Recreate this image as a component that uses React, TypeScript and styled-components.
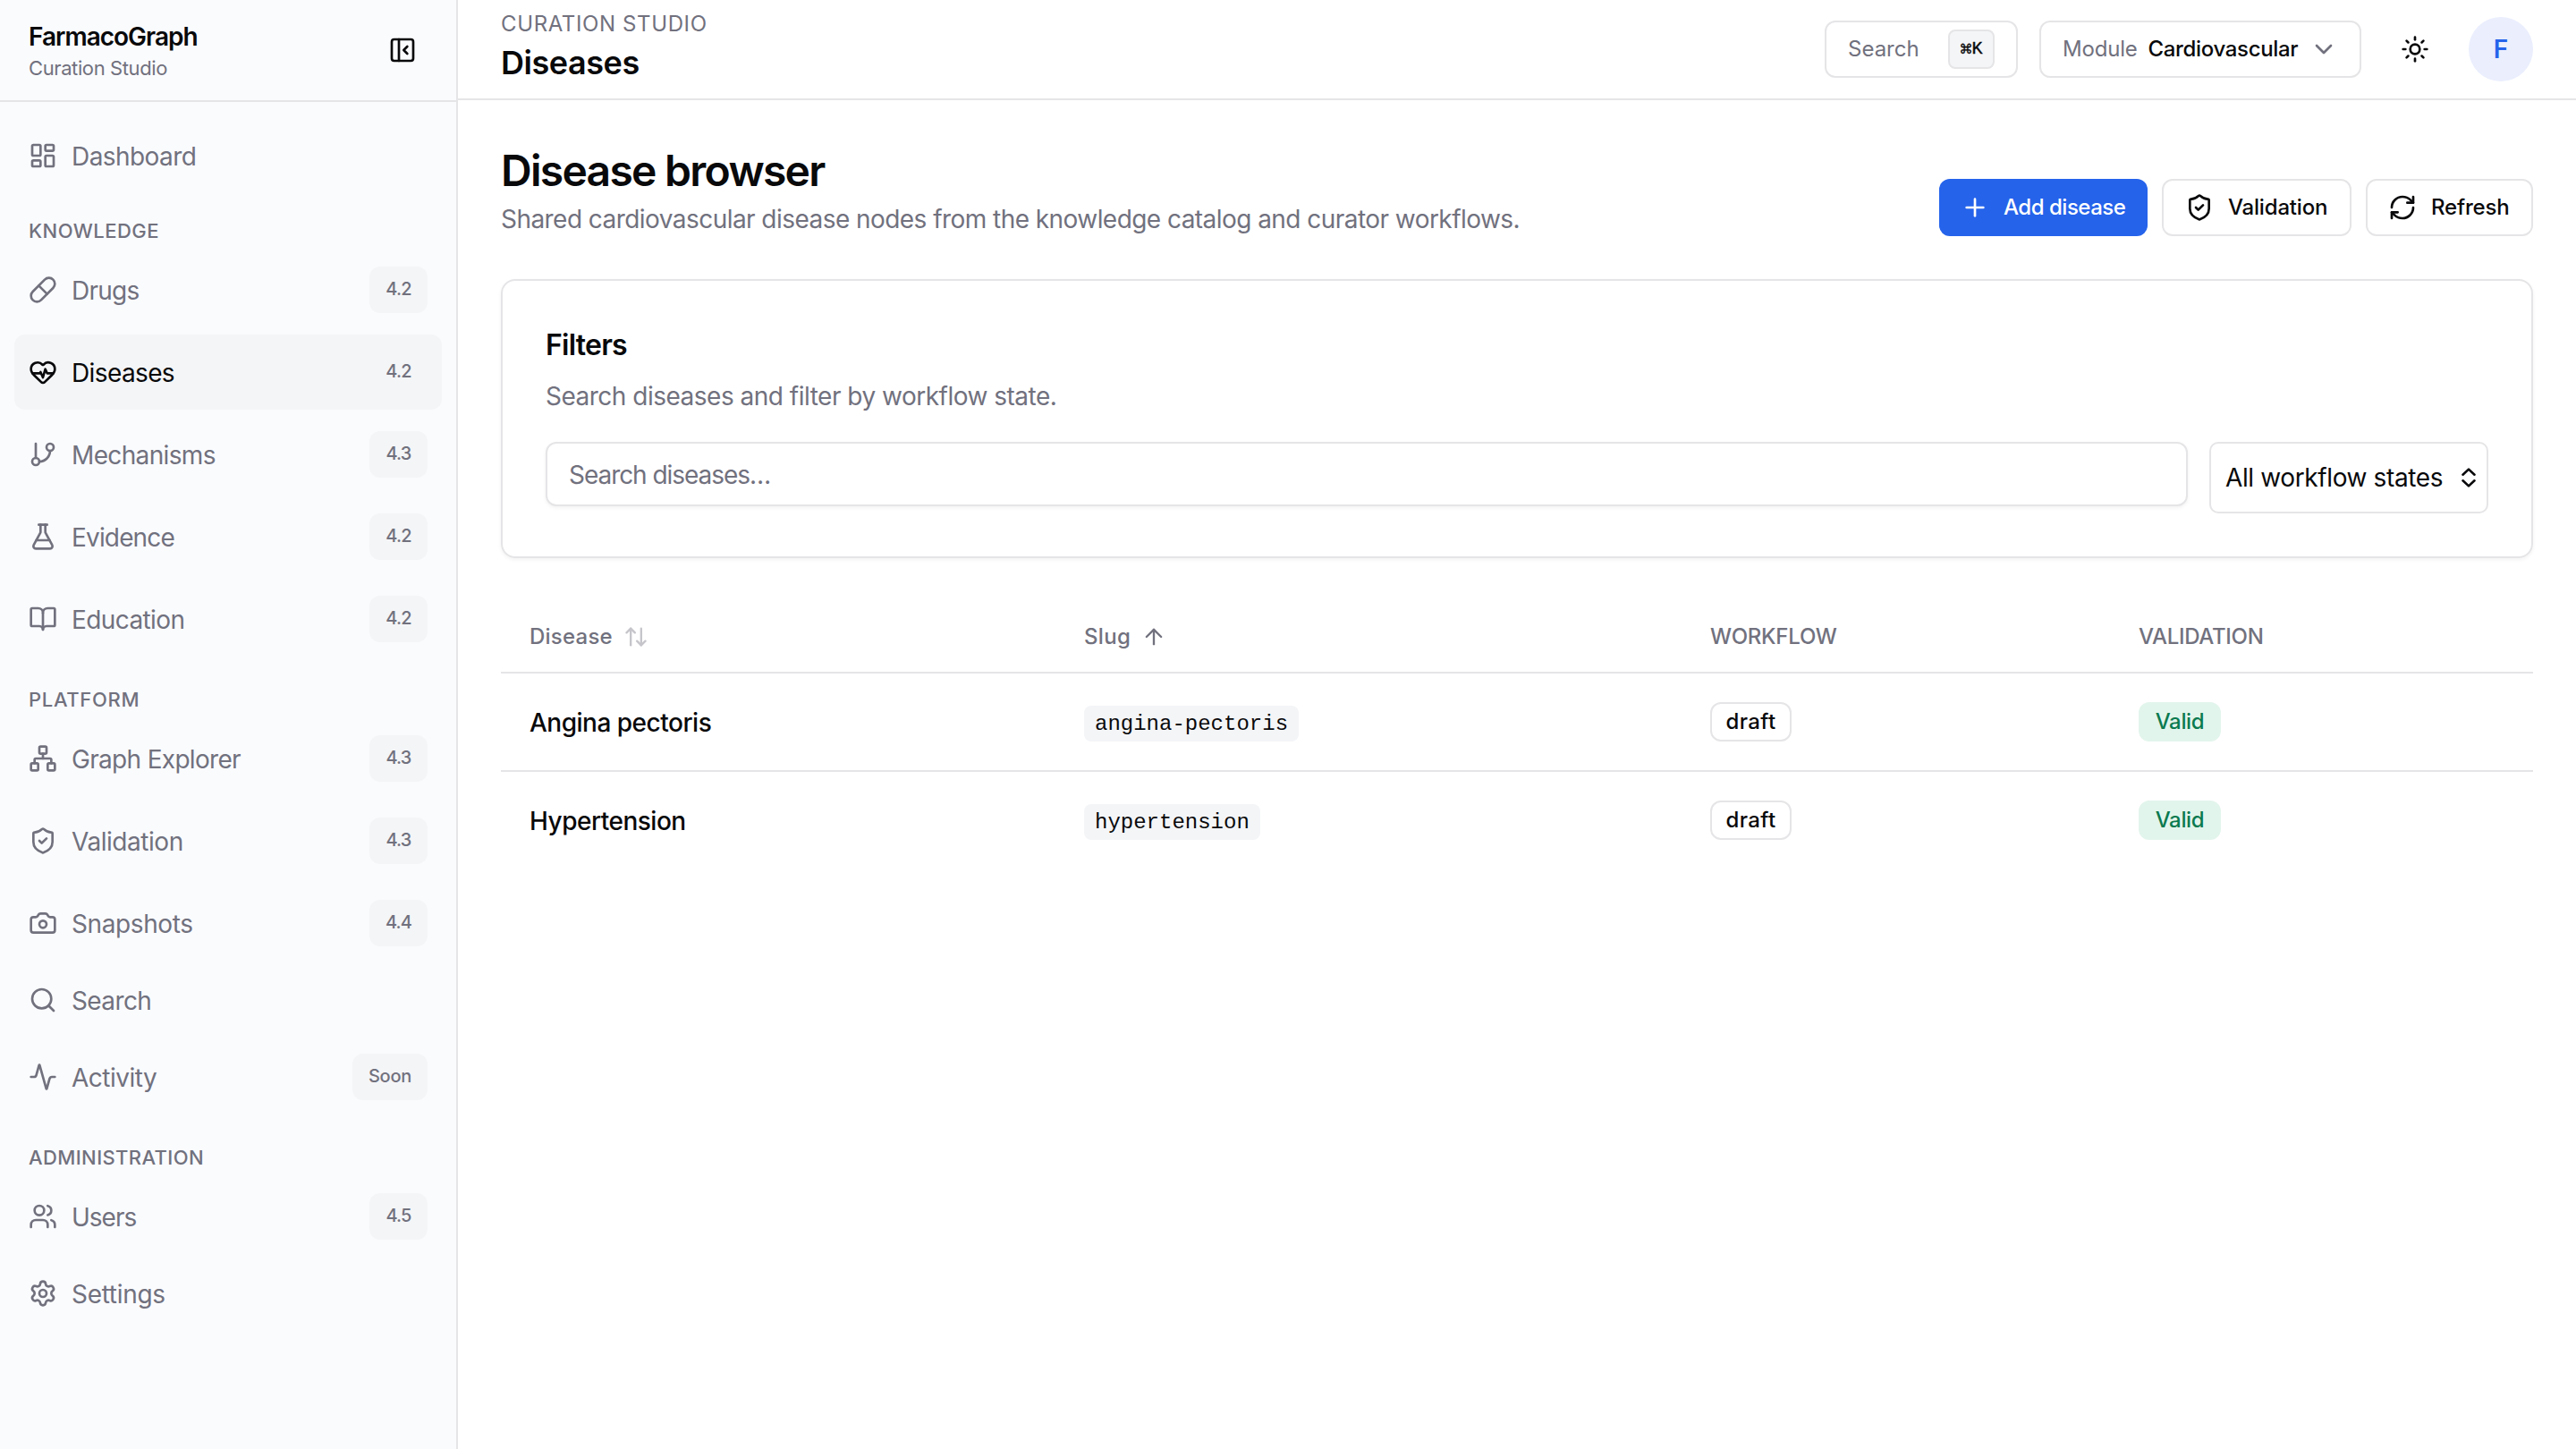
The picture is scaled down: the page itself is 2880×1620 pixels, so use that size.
import React from "react";
import styled, { createGlobalStyle, css } from "styled-components";
import {
  Activity,
  ArrowUp,
  ArrowUpDown,
  BookOpen,
  Camera,
  ChevronDown,
  FlaskConical,
  GitBranch,
  HeartPulse,
  LayoutDashboard,
  Network,
  PanelLeftClose,
  Pill,
  Plus,
  RefreshCw,
  Search,
  Settings,
  ShieldCheck,
  Sun,
  Users,
  type LucideIcon,
} from "lucide-react";

const color = {
  ink: "#09090b",
  muted: "#71717e",
  line: "#e5e5e7",
  sidebar: "#fafbfd",
  soft: "#f4f5f7",
  primary: "#2563eb",
  primarySoft: "#eaeefd",
  okSoft: "#e2f5ec",
  ok: "#0b7a50",
};

const GlobalStyle = createGlobalStyle`
  *, *::before, *::after { box-sizing: border-box; }
  body {
    margin: 0;
    background: #fff;
    color: ${color.ink};
    font-family: Inter, "Liberation Sans", sans-serif;
    font-size: 28px;
    line-height: 40px;
    -webkit-font-smoothing: antialiased;
  }
  button, input { font: inherit; color: inherit; }
  svg { flex: none; display: block; }
`;

const Shell = styled.div`
  display: grid;
  grid-template-columns: 512px 1fr;
  min-height: 1620px;
`;

/* ---------- Sidebar ---------- */

const Sidebar = styled.aside`
  background: ${color.sidebar};
  border-right: 2px solid ${color.line};
`;

const Brand = styled.div`
  height: 114px;
  padding: 0 44px 0 32px;
  display: flex;
  align-items: center;
  justify-content: space-between;
  border-bottom: 2px solid ${color.line};
`;

const BrandText = styled.div`
  display: flex;
  flex-direction: column;
  padding-top: 1px;
`;

const BrandName = styled.span`
  font-weight: 600;
  letter-spacing: -0.99px;
  line-height: 38px;
`;

const BrandSub = styled.span`
  font-size: 22px;
  line-height: 32px;
  letter-spacing: -0.4px;
  color: ${color.muted};
`;

const IconButton = styled.button<{ $size?: number }>`
  width: ${(p) => p.$size ?? 32}px;
  height: ${(p) => p.$size ?? 32}px;
  padding: 0;
  border: 0;
  background: none;
  display: grid;
  place-items: center;
`;

const Nav = styled.nav`
  padding: 24px 16px;
`;

const NavLabel = styled.h3<{ $track: number }>`
  margin: 0;
  padding: 32px 16px 8px;
  font-size: 22px;
  line-height: 32px;
  font-weight: 500;
  letter-spacing: ${(p) => p.$track}px;
  color: ${color.muted};
`;

const NavList = styled.div`
  display: flex;
  flex-direction: column;
  gap: 8px;
`;

const NavItem = styled.a<{ $active?: boolean; $track: number }>`
  display: flex;
  align-items: center;
  gap: 16px;
  padding: 16px;
  border-radius: 12px;
  letter-spacing: ${(p) => p.$track}px;
  color: ${(p) => (p.$active ? color.ink : color.muted)};
  background: ${(p) => (p.$active ? color.soft : "transparent")};
`;

const NavText = styled.span`
  flex: 1;
  padding-top: 2px;
  line-height: 38px;
`;

const NavBadge = styled.span<{ $wide: boolean }>`
  width: ${(p) => (p.$wide ? 84 : 65)}px;
  height: 52px;
  padding-bottom: 2px;
  display: flex;
  align-items: center;
  justify-content: center;
  border-radius: 12px;
  background: ${color.soft};
  color: ${color.muted};
  font-size: 20px;
  font-weight: 500;
  letter-spacing: ${(p) => (p.$wide ? -0.23 : -0.8)}px;
`;

/* ---------- Top bar ---------- */

const Main = styled.main`
  min-width: 0;
`;

const TopBar = styled.header`
  height: 112px;
  padding: 0 48px;
  display: flex;
  align-items: center;
  justify-content: space-between;
  border-bottom: 2px solid ${color.line};
`;

const Crumb = styled.div`
  font-size: 24px;
  line-height: 32px;
  letter-spacing: 0.62px;
  color: ${color.muted};
`;

const TopTitle = styled.div`
  font-size: 36px;
  line-height: 54px;
  padding-bottom: 2px;
  font-weight: 600;
  letter-spacing: -0.45px;
`;

const TopActions = styled.div`
  display: flex;
  align-items: center;
  gap: 24px;
`;

const outlined = css`
  border: 2px solid ${color.line};
  border-radius: 12px;
  background: #fff;
`;

const SearchButton = styled.button`
  ${outlined}
  width: 216px;
  height: 64px;
  padding: 0 24px;
  display: flex;
  align-items: center;
  justify-content: space-between;
  font-size: 24px;
  color: ${color.muted};
`;

const Kbd = styled.kbd`
  width: 52px;
  height: 44px;
  padding-right: 1px;
  display: flex;
  align-items: center;
  justify-content: center;
  border: 2px solid ${color.line};
  border-radius: 8px;
  background: ${color.soft};
  color: ${color.ink};
  font: 500 20px/40px "Liberation Mono", monospace;
  -webkit-text-stroke: 0.4px currentColor;
`;

const KbdSymbol = styled.span`
  font-family: "DejaVu Sans", sans-serif;
  font-size: 15px;
  margin-right: -1px;
`;

const ModuleButton = styled.button`
  ${outlined}
  width: 360px;
  height: 64px;
  padding: 0 24px;
  display: flex;
  align-items: center;
  font-size: 24px;
`;

const ModuleLabel = styled.span`
  color: ${color.muted};
  margin-right: 12px;
  letter-spacing: -0.2px;
`;

const ModuleValue = styled.span`
  flex: 1;
  text-align: left;
  font-weight: 500;
  letter-spacing: -0.34px;
`;

const Avatar = styled.div`
  width: 72px;
  height: 72px;
  border-radius: 50%;
  display: grid;
  place-items: center;
  background: ${color.primarySoft};
  color: ${color.primary};
  font-weight: 600;
`;

/* ---------- Page ---------- */

const Page = styled.div`
  padding: 48px;
  display: flex;
  flex-direction: column;
  gap: 48px;
`;

const PageHead = styled.div`
  display: flex;
  align-items: flex-end;
  justify-content: space-between;
`;

const PageTitle = styled.h1`
  margin: 0;
  font-size: 48px;
  line-height: 62px;
  padding-bottom: 2px;
  font-weight: 600;
  letter-spacing: -1.72px;
`;

const PageSub = styled.p`
  margin: 0;
  padding-top: 2px;
  line-height: 38px;
  letter-spacing: -0.55px;
  color: ${color.muted};
`;

const Buttons = styled.div`
  display: flex;
  gap: 16px;
`;

const Button = styled.button<{ $primary?: boolean; $width: number; $track: number; $inset?: number }>`
  ${outlined}
  width: ${(p) => p.$width}px;
  height: 64px;
  padding: 0 0 0 ${(p) => p.$inset ?? 24}px;
  display: flex;
  align-items: center;
  gap: 16px;
  font-size: 24px;
  font-weight: 500;
  letter-spacing: ${(p) => p.$track}px;
  ${(p) =>
    p.$primary &&
    css`
      border: 0;
      background: ${color.primary};
      color: #fff;
    `}
`;

const Card = styled.section`
  border: 2px solid ${color.line};
  border-radius: 16px;
  padding: 48px;
  box-shadow: 0 2px 4px rgba(0, 0, 0, 0.05);
`;

const CardTitle = styled.h2`
  margin: 0 0 14px;
  padding-top: 1px;
  font-size: 32px;
  line-height: 45px;
  font-weight: 600;
  letter-spacing: -0.76px;
`;

const CardSub = styled.p`
  margin: 0 0 32px;
  padding-top: 2px;
  line-height: 38px;
  letter-spacing: -0.5px;
  color: ${color.muted};
`;

const FilterRow = styled.div`
  display: flex;
  align-items: flex-start;
  gap: 24px;
`;

const TextInput = styled.input`
  ${outlined}
  flex: 1;
  height: 72px;
  padding: 2px 24px 0;
  letter-spacing: -1.05px;
  box-shadow: 0 2px 4px rgba(0, 0, 0, 0.05);
  &::placeholder {
    color: ${color.muted};
    opacity: 1;
  }
`;

const SelectBox = styled.button`
  ${outlined}
  border-radius: 10px;
  width: 312px;
  height: 80px;
  padding: 0 12px 0 16px;
  display: flex;
  align-items: center;
  justify-content: space-between;
  letter-spacing: -0.38px;
`;

/* ---------- Table ---------- */

const rowGrid = css`
  display: grid;
  grid-template-columns: 620px 700px 479px 1fr;
  align-items: center;
`;

const Table = styled.div``;

const HeadRow = styled.div`
  ${rowGrid}
  height: 81px;
  border-bottom: 2px solid ${color.line};
`;

const HeadCell = styled.div<{ $track: number }>`
  padding: 0 32px;
  display: flex;
  align-items: center;
  gap: 12px;
  font-size: 24px;
  font-weight: 500;
  letter-spacing: ${(p) => p.$track}px;
  color: ${color.muted};
`;

const Row = styled.div`
  ${rowGrid}
  height: 110px;
  border-bottom: 2px solid ${color.line};
  &:last-child {
    border-bottom-color: transparent;
  }
`;

const Cell = styled.div`
  padding: 0 32px;
  display: flex;
`;

const Name = styled.span`
  padding-top: 2px;
  line-height: 38px;
  font-weight: 500;
  letter-spacing: -0.5px;
`;

const Code = styled.code`
  height: 40px;
  margin-top: 4px;
  padding: 1px 12px 0;
  border-radius: 8px;
  background: ${color.soft};
  font: 24px/40px "Liberation Mono", monospace;
`;

const Tag = styled.span<{ $ok?: boolean }>`
  height: 44px;
  width: ${(p) => (p.$ok ? 92 : 91)}px;
  display: flex;
  align-items: center;
  justify-content: center;
  border-radius: 12px;
  border: 2px solid ${(p) => (p.$ok ? color.okSoft : color.line)};
  background: ${(p) => (p.$ok ? color.okSoft : "#fff")};
  color: ${(p) => (p.$ok ? color.ok : color.ink)};
  font-size: 24px;
  font-weight: 500;
  letter-spacing: ${(p) => (p.$ok ? -0.36 : 0.43)}px;
`;

type Entry = { icon: LucideIcon; text: string; track: number; badge?: string; active?: boolean };
type Group = { label?: string; track?: number; items: Entry[] };

const groups: Group[] = [
  { items: [{ icon: LayoutDashboard, text: "Dashboard", track: -0.58 }] },
  {
    label: "KNOWLEDGE",
    track: 0.46,
    items: [
      { icon: Pill, text: "Drugs", track: -0.75, badge: "4.2" },
      { icon: HeartPulse, text: "Diseases", track: -0.62, badge: "4.2", active: true },
      { icon: GitBranch, text: "Mechanisms", track: -0.65, badge: "4.3" },
      { icon: FlaskConical, text: "Evidence", track: -0.84, badge: "4.2" },
      { icon: BookOpen, text: "Education", track: -0.6, badge: "4.2" },
    ],
  },
  {
    label: "PLATFORM",
    track: 0.67,
    items: [
      { icon: Network, text: "Graph Explorer", track: -0.68, badge: "4.3" },
      { icon: ShieldCheck, text: "Validation", track: -0.46, badge: "4.3" },
      { icon: Camera, text: "Snapshots", track: -0.4, badge: "4.4" },
      { icon: Search, text: "Search", track: -0.6 },
      { icon: Activity, text: "Activity", track: -0.5, badge: "Soon" },
    ],
  },
  {
    label: "ADMINISTRATION",
    track: 0.39,
    items: [
      { icon: Users, text: "Users", track: -1.0, badge: "4.5" },
      { icon: Settings, text: "Settings", track: -0.3 },
    ],
  },
];

const diseases = [
  { name: "Angina pectoris", slug: "angina-pectoris", workflow: "draft", validation: "Valid" },
  { name: "Hypertension", slug: "hypertension", workflow: "draft", validation: "Valid" },
];

function SelectArrows() {
  return (
    <svg width="16" height="22" viewBox="0 0 16 22" fill="none" stroke="currentColor" strokeWidth="2.6" strokeLinecap="round" strokeLinejoin="round">
      <path d="M1.5 7.7 8 1.6l6.5 6.1M1.5 14.3 8 20.4l6.5-6.1" />
    </svg>
  );
}

export default function App() {
  return (
    <>
      <GlobalStyle />
      <Shell>
        <Sidebar>
          <Brand>
            <BrandText>
              <BrandName>FarmacoGraph</BrandName>
              <BrandSub>Curation Studio</BrandSub>
            </BrandText>
            <IconButton aria-label="Collapse sidebar">
              <PanelLeftClose size={32} />
            </IconButton>
          </Brand>
          <Nav>
            {groups.map((group, i) => (
              <React.Fragment key={i}>
                {group.label && <NavLabel $track={group.track ?? 0}>{group.label}</NavLabel>}
                <NavList>
                  {group.items.map(({ icon: Icon, text, track, badge, active }) => (
                    <NavItem key={text} $active={active} $track={track}>
                      <Icon size={32} />
                      <NavText>{text}</NavText>
                      {badge && <NavBadge $wide={badge.length > 3}>{badge}</NavBadge>}
                    </NavItem>
                  ))}
                </NavList>
              </React.Fragment>
            ))}
          </Nav>
        </Sidebar>
        <Main>
          <TopBar>
            <div>
              <Crumb>CURATION STUDIO</Crumb>
              <TopTitle>Diseases</TopTitle>
            </div>
            <TopActions>
              <SearchButton>
                Search
                <Kbd>
                  <KbdSymbol>⌘</KbdSymbol>K
                </Kbd>
              </SearchButton>
              <ModuleButton>
                <ModuleLabel>Module</ModuleLabel>
                <ModuleValue>Cardiovascular</ModuleValue>
                <ChevronDown size={32} color={color.muted} />
              </ModuleButton>
              <IconButton $size={72} aria-label="Toggle theme">
                <Sun size={32} />
              </IconButton>
              <Avatar>F</Avatar>
            </TopActions>
          </TopBar>
          <Page>
            <PageHead>
              <div>
                <PageTitle>Disease browser</PageTitle>
                <PageSub>Shared cardiovascular disease nodes from the knowledge catalog and curator workflows.</PageSub>
              </div>
              <Buttons>
                <Button $primary $width={233} $track={-0.48}>
                  <Plus size={32} />
                  Add disease
                </Button>
                <Button $width={212} $track={-0.18}>
                  <ShieldCheck size={32} />
                  Validation
                </Button>
                <Button $width={187} $track={-0.16} $inset={23}>
                  <RefreshCw size={32} />
                  Refresh
                </Button>
              </Buttons>
            </PageHead>
            <Card>
              <CardTitle>Filters</CardTitle>
              <CardSub>Search diseases and filter by workflow state.</CardSub>
              <FilterRow>
                <TextInput placeholder="Search diseases…" />
                <SelectBox>
                  All workflow states
                  <SelectArrows />
                </SelectBox>
              </FilterRow>
            </Card>
            <Table>
              <HeadRow>
                <HeadCell $track={0.24}>
                  Disease
                  <ArrowUpDown size={28} opacity={0.4} />
                </HeadCell>
                <HeadCell $track={0.3}>
                  Slug
                  <ArrowUp size={28} />
                </HeadCell>
                <HeadCell $track={-0.24}>WORKFLOW</HeadCell>
                <HeadCell $track={-0.3}>VALIDATION</HeadCell>
              </HeadRow>
              {diseases.map((d) => (
                <Row key={d.slug}>
                  <Cell>
                    <Name>{d.name}</Name>
                  </Cell>
                  <Cell>
                    <Code>{d.slug}</Code>
                  </Cell>
                  <Cell>
                    <Tag>{d.workflow}</Tag>
                  </Cell>
                  <Cell>
                    <Tag $ok>{d.validation}</Tag>
                  </Cell>
                </Row>
              ))}
            </Table>
          </Page>
        </Main>
      </Shell>
    </>
  );
}
